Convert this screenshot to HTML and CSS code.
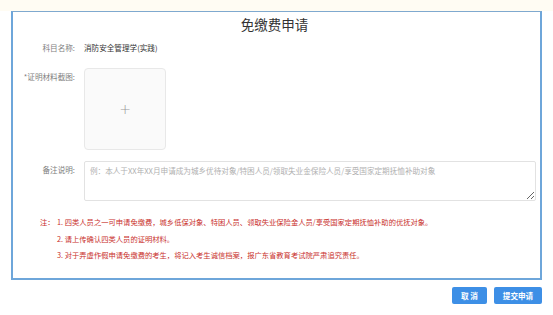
FILE: index.html
```html
<!DOCTYPE html>
<html lang="zh-CN">
<head>
<meta charset="utf-8">
<title>免缴费申请</title>
<link rel="stylesheet" href="styles.css">
</head>
<body>
<div class="page">
  <div class="dialog">
    <h1 class="title">免缴费申请</h1>
    <div class="row row-subject">
      <div class="label">科目名称:</div>
      <div class="value">消防安全管理学(实践)</div>
    </div>
    <div class="row row-upload">
      <div class="label label-top">*证明材料截图:</div>
      <div class="upload"><span class="plus">+</span></div>
    </div>
    <div class="row row-remark">
      <div class="label label-top2">备注说明:</div>
      <textarea class="remark" placeholder="例：本人于XX年XX月申请成为城乡优待对象/特困人员/领取失业金保险人员/享受国家定期抚恤补助对象"></textarea>
    </div>
    <div class="notes">
      <div class="notes-head">注：</div>
      <ol class="notes-list">
        <li>1. 四类人员之一可申请免缴费，城乡低保对象、特困人员、领取失业保险金人员/享受国家定期抚恤补助的优抚对象。</li>
        <li>2. 请上传确认四类人员的证明材料。</li>
        <li>3. 对于弄虚作假申请免缴费的考生，将记入考生诚信档案，报广东省教育考试院严肃追究责任。</li>
      </ol>
    </div>
  </div>
  <div class="actions">
    <button class="btn" type="button">取 消</button>
    <button class="btn" type="button">提交申请</button>
  </div>
</div>
</body>
</html>
```

FILE: styles.css
```css
* { box-sizing: border-box; }
html, body {
  margin: 0;
  padding: 0;
  background: #ffffff;
  font-family: "Noto Sans CJK SC", "Noto Sans", "Liberation Sans", sans-serif;
}
.page {
  padding: 11px 11px 0 11px;
  background: linear-gradient(#fffcf3 0, #fffcf3 11px, #ffffff 11px);
}
.dialog {
  width: 531px;
  height: 269px;
  border: 2px solid #6ea6da;
  border-top-color: #7fa9cf;
  border-top-width: 1.5px;
  background: #fff;
  padding: 2px 4px 0 0;
}
.title {
  margin: 0;
  text-align: center;
  font-size: 13.5px;
  line-height: 20px;
  font-weight: normal;
  color: #333;
}
.row {
  display: grid;
  grid-template-columns: 62px 1fr;
  column-gap: 9px;
  align-items: start;
}
.label {
  text-align: right;
  font-size: 7.6px;
  line-height: 12px;
  color: #808080;
}
.value {
  font-size: 7.6px;
  line-height: 12px;
  color: #333;
}
.row-subject { margin-top: 8px; }
.row-upload { margin-top: 14px; }
.label-top { padding-top: 3px; }
.upload {
  width: 82px;
  height: 82px;
  background: #fafafa;
  border: 1px solid #e8e8e8;
  border-radius: 4px;
  display: flex;
  align-items: center;
  justify-content: center;
}
.plus {
  font-family: "DejaVu Sans", sans-serif;
  font-size: 14px;
  font-weight: 200;
  color: #9a9a9a;
  line-height: 1;
}
.row-remark { margin-top: 11px; }
.label-top2 { padding-top: 3px; }
.remark {
  display: block;
  width: 452px;
  height: 40px;
  border: 1px solid #e2e2e2;
  border-radius: 2px;
  padding: 3px 5px;
  font-family: inherit;
  font-size: 7.6px;
  line-height: 12px;
  color: #333;
  background: #fff;
  resize: vertical;
  outline: none;
}
.remark::placeholder { color: #b0b0b0; }
.notes {
  display: flex;
  margin-top: 13px;
  padding-left: 27px;
  color: #c9302c;
  font-size: 7.3px;
  line-height: 16.5px;
}
.notes-head { width: 17px; flex: none; }
.notes-list {
  margin: 0;
  padding: 0;
  list-style: none;
}
.actions {
  width: 531px;
  display: flex;
  justify-content: flex-end;
  gap: 7px;
  margin-top: 7px;
}
.btn {
  height: 17px;
  padding: 0;
  border: none;
  border-radius: 2px;
  background: #3d8fe6;
  color: #fff;
  font-family: inherit;
  font-size: 7.6px;
  line-height: 17px;
  font-weight: bold;
}
.btn:first-child { width: 35px; }
.btn:last-child { width: 48px; }
```
